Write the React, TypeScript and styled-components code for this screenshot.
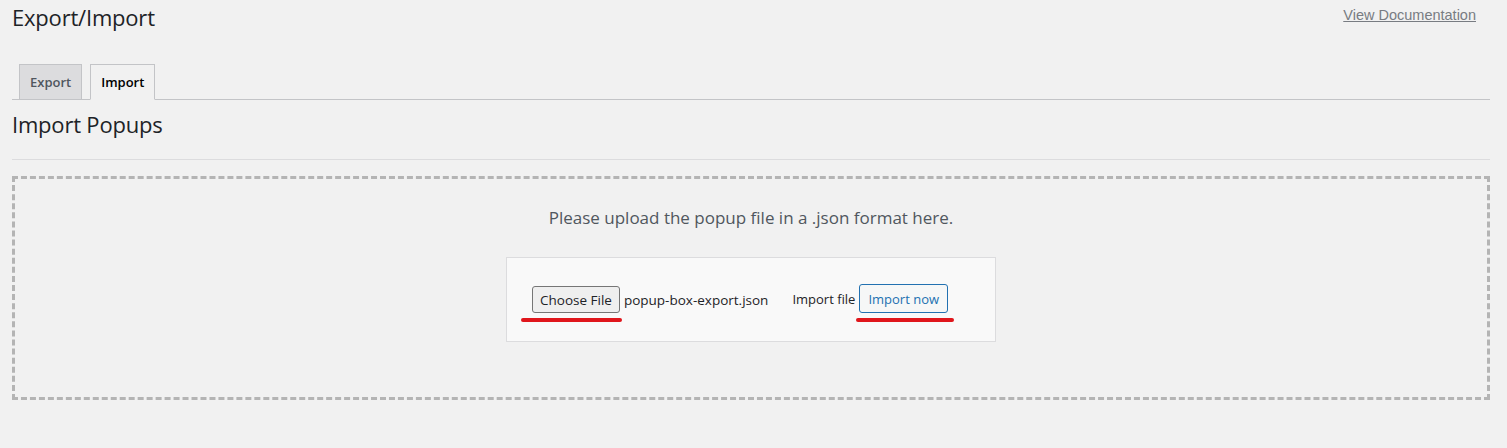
import styled, { createGlobalStyle } from 'styled-components';

const GlobalStyle = createGlobalStyle`
  body {
    margin: 0;
    background: #f1f1f1;
    font-family: 'Open Sans', 'Noto Sans', sans-serif;
    color: #1d2327;
  }
`;

const Wrap = styled.div`
  padding: 0 17px 0 12px;
`;

const Header = styled.div`
  display: flex;
  justify-content: space-between;
  align-items: flex-start;
  height: 64px;
`;

const Title = styled.h1`
  margin: 0;
  padding-top: 3px;
  font-size: 22px;
  font-weight: 400;
  line-height: 28px;
  letter-spacing: -0.2px;
`;

const DocLink = styled.a`
  margin: 6px 14px 0 0;
  font-family: 'Liberation Sans', Arial, sans-serif;
  font-size: 14.5px;
  line-height: 18px;
  color: #787c82;
  text-decoration: underline;
  cursor: pointer;
`;

const TabBar = styled.nav`
  display: flex;
  gap: 8px;
  padding-left: 7px;
  border-bottom: 1px solid #c3c4c7;
  height: 35px;
`;

const Tab = styled.a<{ $active?: boolean }>`
  display: flex;
  align-items: center;
  padding: 0 10px;
  height: ${({ $active }) => ($active ? '36px' : '35px')};
  box-sizing: border-box;
  border: 1px solid #c3c4c7;
  border-bottom: ${({ $active }) => ($active ? '1px solid #f1f1f1' : 'none')};
  background: ${({ $active }) => ($active ? '#f1f1f1' : '#dcdcde')};
  color: ${({ $active }) => ($active ? '#000' : '#50575e')};
  font-size: 13px;
  font-weight: 600;
  cursor: pointer;
`;

const SectionTitle = styled.h2`
  margin: 0;
  padding-top: 10px;
  height: 60px;
  box-sizing: border-box;
  font-size: 22px;
  font-weight: 400;
  line-height: 28px;
  letter-spacing: -0.2px;
  border-bottom: 1px solid #dcdcde;
`;

const DropZone = styled.div`
  margin-top: 16px;
  height: 224px;
  box-sizing: border-box;
  border: 3px dashed #b4b4b4;
  display: flex;
  flex-direction: column;
  align-items: center;
  padding-top: 28px;
`;

const Hint = styled.p`
  margin: 0;
  font-size: 17px;
  line-height: 22px;
  color: #50575e;
`;

const Panel = styled.form`
  margin-top: 28px;
  width: 490px;
  height: 85px;
  box-sizing: border-box;
  background: #f9f9f9;
  border: 1px solid #dcdcde;
  display: flex;
  align-items: center;
  padding: 0 0 0 25px;
`;

const FilePick = styled.div`
  display: flex;
  align-items: center;
  gap: 4px;
  font-size: 13.5px;
  color: #1d2327;
`;

// red annotation stroke under the two controls
const Marked = styled.span<{ $left: number; $right: number }>`
  position: relative;
  display: inline-flex;
  &::after {
    content: '';
    position: absolute;
    left: ${({ $left }) => $left}px;
    right: ${({ $right }) => $right}px;
    bottom: -9px;
    height: 4px;
    border-radius: 2px;
    background: #e0161c;
  }
`;

const ChooseButton = styled.button`
  height: 27px;
  padding: 0 7px;
  font-family: 'Open Sans', 'Noto Sans', sans-serif;
  font-size: 13.5px;
  color: #1d2327;
  background: #efefef;
  border: 1px solid #767676;
  border-radius: 3px;
`;

const ImportGroup = styled.div`
  display: flex;
  align-items: center;
  gap: 4px;
  margin-left: 24px;
  margin-bottom: 2px;
  font-size: 13px;
`;

const ImportButton = styled.button`
  height: 29px;
  padding: 0 8px;
  font-family: 'Open Sans', 'Noto Sans', sans-serif;
  font-size: 13px;
  color: #2271b1;
  background: #f6f7f7;
  border: 1px solid #2271b1;
  border-radius: 3px;
`;

export default function App() {
  return (
    <>
      <GlobalStyle />
      <Wrap>
        <Header>
          <Title>Export/Import</Title>
          <DocLink>View Documentation</DocLink>
        </Header>
        <TabBar>
          <Tab>Export</Tab>
          <Tab $active>Import</Tab>
        </TabBar>
        <SectionTitle>Import Popups</SectionTitle>
        <DropZone>
          <Hint>Please upload the popup file in a .json format here.</Hint>
          <Panel>
            <FilePick>
              <Marked $left={-11} $right={-2}>
                <ChooseButton type="button">Choose File</ChooseButton>
              </Marked>
              popup-box-export.json
            </FilePick>
            <ImportGroup>
              Import file
              <Marked $left={-3} $right={-6}>
                <ImportButton type="button">Import now</ImportButton>
              </Marked>
            </ImportGroup>
          </Panel>
        </DropZone>
      </Wrap>
    </>
  );
}
